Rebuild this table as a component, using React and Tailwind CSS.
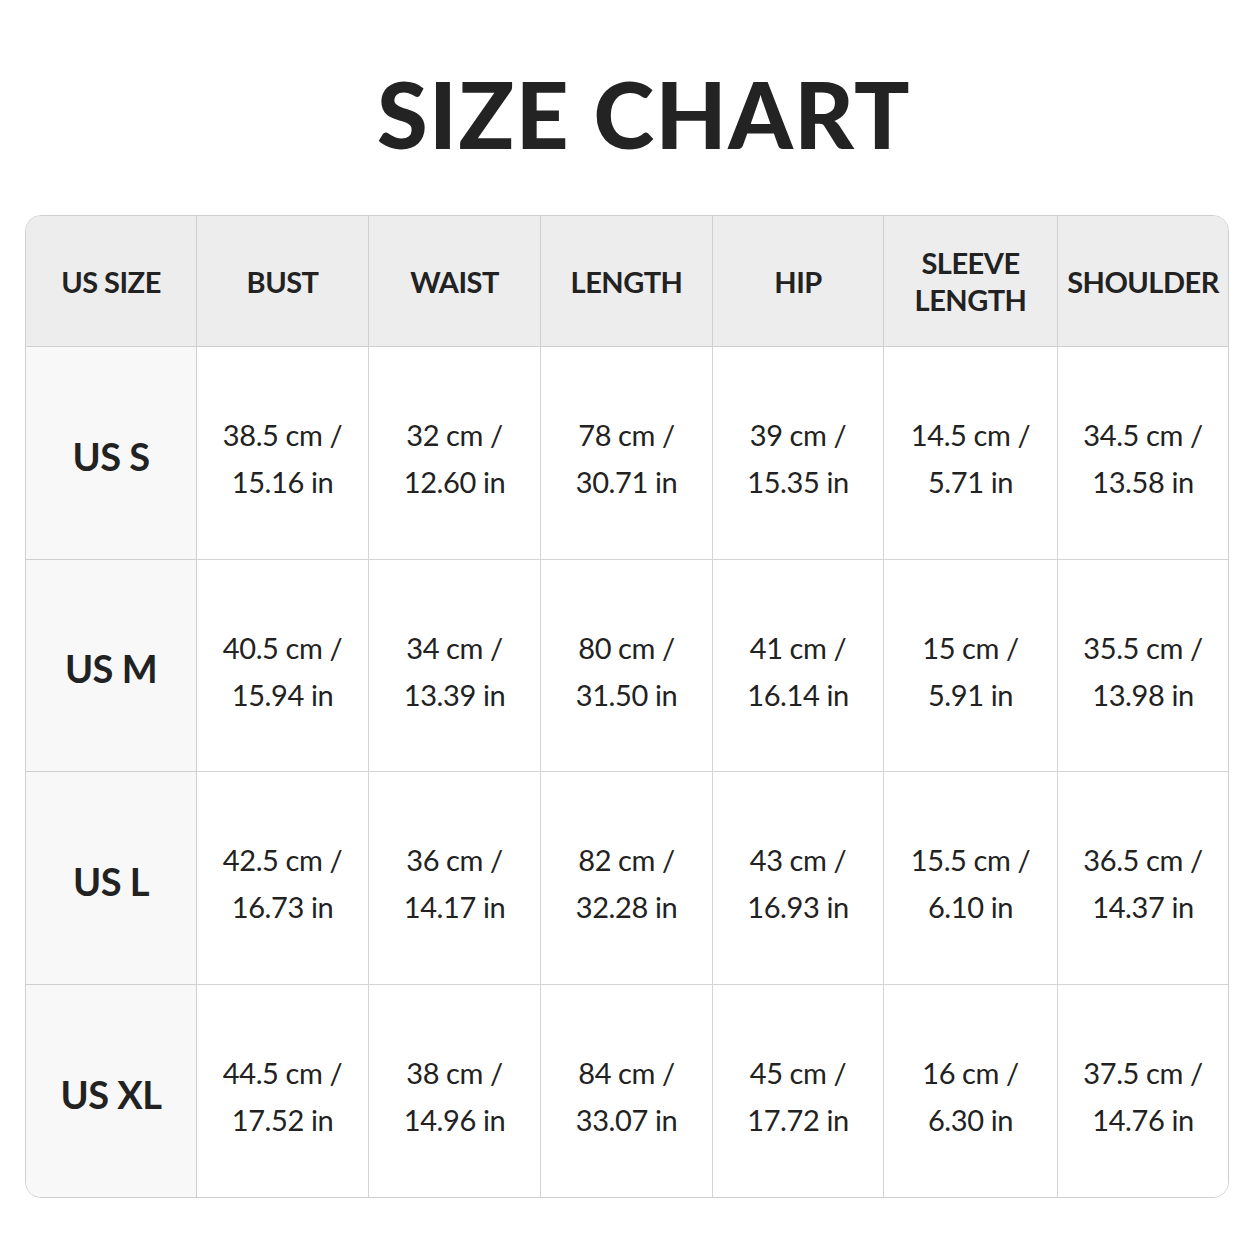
import React from 'react';

const headers = ['US SIZE', 'BUST', 'WAIST', 'LENGTH', 'HIP', 'SLEEVE\nLENGTH', 'SHOULDER'];

const rows = [
  { size: 'US S', cells: [['38.5 cm /', '15.16 in'], ['32 cm /', '12.60 in'], ['78 cm /', '30.71 in'], ['39 cm /', '15.35 in'], ['14.5 cm /', '5.71 in'], ['34.5 cm /', '13.58 in']] },
  { size: 'US M', cells: [['40.5 cm /', '15.94 in'], ['34 cm /', '13.39 in'], ['80 cm /', '31.50 in'], ['41 cm /', '16.14 in'], ['15 cm /', '5.91 in'], ['35.5 cm /', '13.98 in']] },
  { size: 'US L', cells: [['42.5 cm /', '16.73 in'], ['36 cm /', '14.17 in'], ['82 cm /', '32.28 in'], ['43 cm /', '16.93 in'], ['15.5 cm /', '6.10 in'], ['36.5 cm /', '14.37 in']] },
  { size: 'US XL', cells: [['44.5 cm /', '17.52 in'], ['38 cm /', '14.96 in'], ['84 cm /', '33.07 in'], ['45 cm /', '17.72 in'], ['16 cm /', '6.30 in'], ['37.5 cm /', '14.76 in']] },
];

export default function App() {
  return (
    <div className="w-[1254px] h-[1254px] bg-white text-[#222] font-['Lato','Liberation_Sans',sans-serif]">
      <h1 className="pt-[68px] pl-[34px] h-[215px] text-center text-[92px] leading-none font-black tracking-[1.5px] text-[#232323]">
        SIZE CHART
      </h1>

      <div className="mx-[25px] border border-[#cfcfcf] rounded-[16px] overflow-hidden">
        <div className="grid grid-cols-[171px_172px_172px_172px_171px_174px_170px] grid-rows-[131px_213px_212px_213px_212px]">
          {headers.map((h, i) => (
            <div key={h}
                 className={`bg-[#ededed] border-b border-[#cfcfcf] flex items-center justify-center text-center whitespace-pre-line text-[29px] leading-[37px] tracking-[-0.5px] font-bold ${i < 6 ? 'border-r' : ''}`}>
              {h}
            </div>
          ))}
          {rows.map((r, ri) => (
            <React.Fragment key={r.size}>
              <div className={`bg-[#f8f8f8] border-r border-[#cfcfcf] flex items-center justify-center text-[38px] tracking-[-0.5px] font-bold pt-[6px] ${ri < 3 ? 'border-b' : ''}`}>
                {r.size}
              </div>
              {r.cells.map((c, ci) => (
                <div key={ci}
                     className={`bg-white border-[#d4d4d4] flex flex-col items-center justify-center text-[29px] leading-[47px] tracking-[-0.4px] pt-[10px] ${ci < 5 ? 'border-r' : ''} ${ri < 3 ? 'border-b' : ''}`}>
                  <span>{c[0]}</span>
                  <span>{c[1]}</span>
                </div>
              ))}
            </React.Fragment>
          ))}
        </div>
      </div>
    </div>
  );
}
